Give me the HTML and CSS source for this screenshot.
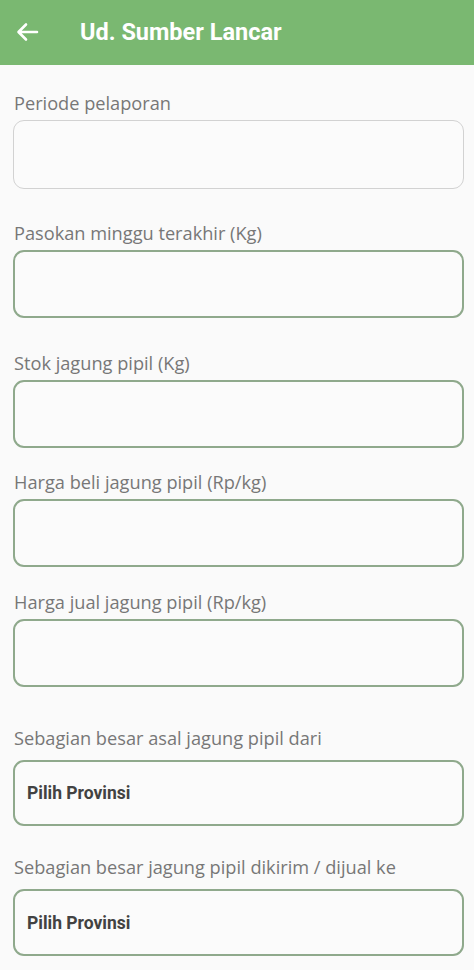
FILE: index.html
```html
<!DOCTYPE html>
<html lang="id">
<head>
<meta charset="utf-8">
<title>Ud. Sumber Lancar</title>
<link rel="stylesheet" href="styles.css">
</head>
<body>
<header class="appbar">
  <svg class="back" width="24" height="20" viewBox="0 0 24 20" aria-hidden="true">
    <path d="M22 10 H4 M11 2.5 L3.5 10 L11 17.5" fill="none" stroke="#ffffff" stroke-width="2.6" stroke-linecap="round" stroke-linejoin="round"/>
  </svg>
  <h1 class="title">Ud. Sumber Lancar</h1>
</header>
<main class="form">
  <div class="field f1">
    <label class="label">Periode pelaporan</label>
    <div class="box box-plain"></div>
  </div>
  <div class="field f2">
    <label class="label">Pasokan minggu terakhir (Kg)</label>
    <div class="box"></div>
  </div>
  <div class="field f3">
    <label class="label">Stok jagung pipil (Kg)</label>
    <div class="box"></div>
  </div>
  <div class="field f4">
    <label class="label">Harga beli jagung pipil (Rp/kg)</label>
    <div class="box"></div>
  </div>
  <div class="field f5">
    <label class="label">Harga jual jagung pipil (Rp/kg)</label>
    <div class="box"></div>
  </div>
  <div class="field f6">
    <label class="label">Sebagian besar asal jagung pipil dari</label>
    <div class="box box-select">Pilih Provinsi</div>
  </div>
  <div class="field f7">
    <label class="label">Sebagian besar jagung pipil dikirim / dijual ke</label>
    <div class="box box-select">Pilih Provinsi</div>
  </div>
</main>
</body>
</html>
```
FILE: styles.css
```css
* { box-sizing: border-box; }
html, body { margin: 0; padding: 0; }
body {
  background: #fafafa;
  width: 474px;
  height: 970px;
  overflow: hidden;
  font-family: "Open Sans", "Noto Sans", sans-serif;
}
.appbar {
  height: 65px;
  background: #7ab871;
  display: flex;
  align-items: center;
  padding-left: 15px;
  padding-bottom: 1px;
}
.back { display: block; margin-right: 41px; }
.title {
  margin: 0;
  font-family: Roboto, "Liberation Sans", sans-serif;
  font-weight: 700;
  font-size: 23.5px;
  color: #ffffff;
  letter-spacing: 0;
}
.form {
  padding: 0 10px 0 13px;
}
.field { display: flex; flex-direction: column; }
.f1 { margin-top: 28px; }
.f2 { margin-top: 34px; }
.f3 { margin-top: 35px; }
.f4 { margin-top: 24px; }
.f5 { margin-top: 25px; }
.f6 { margin-top: 41px; }
.f7 { margin-top: 31px; }
.label {
  display: block;
  height: 20px;
  line-height: 20px;
  font-size: 18.2px;
  color: #777777;
  padding-left: 1px;
  margin-bottom: 7px;
  white-space: nowrap;
}
.f6 .label, .f7 .label { margin-bottom: 12px; }
.box {
  height: 68px;
  border: 2px solid #8fa98c;
  border-radius: 11px;
  background: #fbfbfb;
}
.box-plain {
  height: 69px;
  border: 1.5px solid #d2d2d2;
}
.box-select {
  height: 66px;
  display: flex;
  align-items: center;
  padding-left: 12px;
  font-family: Roboto, "Liberation Sans", sans-serif;
  font-weight: 700;
  font-size: 17.5px;
  color: #424242;
}
.f7 .box-select { height: 67px; }
```
